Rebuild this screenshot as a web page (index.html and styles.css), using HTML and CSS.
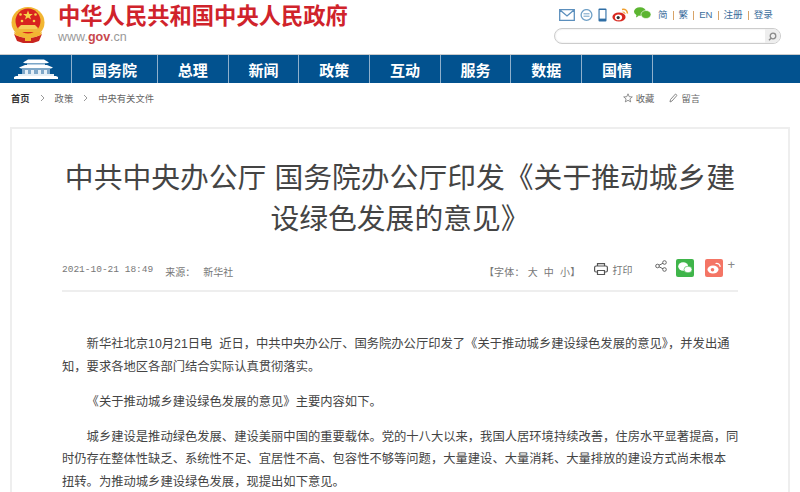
FILE: index.html
```html
<!DOCTYPE html>
<html lang="zh-CN">
<head>
    <meta charset="UTF-8">
    <title>中共中央办公厅 国务院办公厅印发《关于推动城乡建设绿色发展的意见》</title>
    <link rel="stylesheet" href="styles.css">
</head>
<body>
    <div class="header">
        <div class="logo">
            <svg class="emblem" width="34" height="36" viewBox="0 0 34 36">
                <ellipse cx="17" cy="15.500" rx="16.500" ry="15.500" fill="#f2b632"/>
                <circle cx="17" cy="14" r="12.500" fill="#d8231f"/>
                <path d="M17 3.500l1.300 3.400 3.600.1-2.900 2.200 1 3.400-3-2-3 2 1-3.400-2.900-2.200 3.600-.1z" fill="#f7d24a"/>
                <circle cx="9.500" cy="7.500" r="1.300" fill="#f7d24a"/>
                <circle cx="24.500" cy="7.500" r="1.300" fill="#f7d24a"/>
                <circle cx="11" cy="14" r="1.300" fill="#f7d24a"/>
                <circle cx="23" cy="14" r="1.300" fill="#f7d24a"/>
                <path d="M7 21l3-3h14l3 3-1 2H8z" fill="#f5cd5a"/>
                <path d="M4 22h26v3H4z" fill="#f0b93a"/>
                <path d="M3 27q14 8 28 0l-3 7-6 2H12l-6-2z" fill="#c9241f"/>
                <path d="M3 25q14 7 28 0l-1 3q-13 6-26 0z" fill="#f2b632"/>
                <path d="M14 29h6v5h-6z" fill="#f2b632"/>
            </svg>
            <div class="site-name">
                <div class="site-title">中华人民共和国中央人民政府</div>
                <div class="site-url">www.<b>gov</b>.cn</div>
            </div>
        </div>
        <div class="tools">
            <div class="tool-links">
                <svg width="16" height="12" viewBox="0 0 16 12"><path d="M.7.7h14.600v10.600H.7zM1 1l7 6 7-6" fill="none" stroke="#5b8fbd" stroke-width="1.300"/></svg>
                <svg width="13" height="13" viewBox="0 0 13 13"><circle cx="6.500" cy="6" r="5.400" fill="none" stroke="#6fa0c6" stroke-width="1.300"/><path d="M3.500 4.800h6M3.500 7.200h6" stroke="#6fa0c6"/></svg>
                <svg width="9" height="14" viewBox="0 0 9 14"><rect x=".5" y=".5" width="8" height="13" rx="1" fill="#2f6ea5"/><rect x="1.600" y="2" width="5.800" height="8.600" fill="#fff"/></svg>
                <svg width="17" height="14" viewBox="0 0 17 14"><ellipse cx="7" cy="9" rx="6.600" ry="4.600" fill="#d9281f"/><ellipse cx="6.500" cy="9.400" rx="3.600" ry="2.800" fill="#fff"/><circle cx="6.200" cy="9.600" r="1.600" fill="#333"/><path d="M10 1.500q5-1 5.500 4" fill="none" stroke="#f0a030" stroke-width="1.500"/><path d="M10.500 4q2.500-.3 2.700 2" fill="none" stroke="#f0a030"/></svg>
                <svg class="wechat-top" width="17" height="12" viewBox="0 0 17 12"><ellipse cx="6" cy="4.500" rx="6" ry="4.300" fill="#5cb531"/><ellipse cx="12" cy="7.500" rx="5" ry="4" fill="#5cb531" stroke="#fff" stroke-width=".6"/><path d="M2.500 7.500l-.5 3 3-1.800z" fill="#5cb531"/></svg>
                <a class="lang">简</a><i></i><a class="lang">繁</a><i></i><a class="lang">EN</a><i></i><a class="lang">注册</a><i></i><a class="lang">登录</a>
            </div>
            <div class="search">
                <span class="search-btn">
                    <svg width="9" height="9" viewBox="0 0 9 9"><circle cx="5" cy="4" r="2.800" fill="none" stroke="#8a8a8a" stroke-width="1.300"/><path d="M3 6.200L1 8.300" stroke="#8a8a8a" stroke-width="1.300"/></svg>
                </span>
            </div>
        </div>
    </div>

    <div class="nav">
        <div class="nav-item nav-home">
            <svg width="46" height="20" viewBox="0 0 46 20">
                <path d="M10 3.500l5-3h16l5 3-2 .8H12z" fill="#fff"/>
                <path d="M14 4.500h18v1.500H14z" fill="#b9d0e3"/>
                <path d="M6 8.500l6-2.500h22l6 2.500-2 1H8z" fill="#fff"/>
                <path d="M9 10h28v5H9z" fill="#7fa7c8"/>
                <path d="M12 11h3v4h-3zM18 11h3v4h-3zM25 11h3v4h-3zM31 11h3v4h-3z" fill="#e4eef6"/>
                <path d="M5 15h36v2H5z" fill="#e6eff6"/>
                <path d="M1 18l2-1h40l2 1v2H1z" fill="#fff"/>
            </svg>
        </div>
        <a class="nav-item nav-first">国务院</a>
        <a class="nav-item">总理</a>
        <a class="nav-item">新闻</a>
        <a class="nav-item">政策</a>
        <a class="nav-item">互动</a>
        <a class="nav-item">服务</a>
        <a class="nav-item">数据</a>
        <a class="nav-item">国情</a>
    </div>

    <div class="crumbs">
        <div class="crumb-path">
            <b>首页</b>
            <svg width="5" height="8" viewBox="0 0 5 8"><path d="M1 1l3 3-3 3" fill="none" stroke="#999"/></svg>
            <span>政策</span>
            <svg width="5" height="8" viewBox="0 0 5 8"><path d="M1 1l3 3-3 3" fill="none" stroke="#999"/></svg>
            <span>中央有关文件</span>
        </div>
        <div class="crumb-tools">
            <span class="crumb-tool"><svg width="10" height="10" viewBox="0 0 10 10"><path d="M5 .8l1.200 2.900 3.100.2-2.400 2 .8 3-2.700-1.600-2.700 1.600.8-3-2.400-2 3.100-.2z" fill="none" stroke="#777" stroke-width=".8"/></svg>收藏</span>
            <span class="crumb-tool"><svg width="9" height="10" viewBox="0 0 9 10"><path d="M1 9l.5-2.500L6.500 1l1.500 1.400L3 8z" fill="none" stroke="#888"/></svg>留言</span>
        </div>
    </div>

    <div class="article">
        <h1 class="article-title">中共中央办公厅 国务院办公厅印发《关于推动城乡建设绿色发展的意见》</h1>
        <div class="meta">
            <div class="meta-left">
                <span class="date">2021-10-21 18:49</span>
                <span>来源：</span>
                <span class="source">新华社</span>
            </div>
            <div class="meta-right">
                <span class="font-size">【字体： 大&nbsp;&nbsp;中&nbsp;&nbsp;小】</span>
                <span class="print">
                    <svg width="14" height="12" viewBox="0 0 14 12"><path d="M3.500 3V.7h7V3" fill="none" stroke="#555" stroke-width="1.200"/><rect x=".6" y="3" width="12.800" height="6" rx="1.500" fill="none" stroke="#555" stroke-width="1.200"/><path d="M3.500 7.500h7v4h-7z" fill="#fff" stroke="#555" stroke-width="1.200"/></svg>打印
                </span>
                <div class="share">
                    <svg width="12" height="12" viewBox="0 0 12 12"><path d="M9.500 2.500L2.500 6l7 3.500" fill="none" stroke="#666"/><circle cx="9.500" cy="2.500" r="1.800" fill="#fff" stroke="#666"/><circle cx="2.500" cy="6" r="1.800" fill="#fff" stroke="#666"/><circle cx="9.500" cy="9.500" r="1.800" fill="#fff" stroke="#666"/></svg>
                    <span class="share-btn share-wechat">
                        <svg width="14" height="12" viewBox="0 0 14 12"><ellipse cx="5.200" cy="4.500" rx="5" ry="4.200" fill="#fff"/><ellipse cx="10" cy="7.500" rx="4" ry="3.300" fill="#fff" stroke="#3fb54a" stroke-width=".6"/></svg>
                    </span>
                    <span class="share-btn share-weibo">
                        <svg width="14" height="12" viewBox="0 0 14 12"><ellipse cx="6" cy="7.500" rx="5.500" ry="4" fill="#fff"/><circle cx="5.500" cy="7.800" r="1.800" fill="#f47565"/><path d="M8.500 1.500q4-.8 4.800 3.300" fill="none" stroke="#fff" stroke-width="1.200"/></svg>
                    </span>
                    <span class="share-more">+</span>
                </div>
            </div>
        </div>
        <div class="content">
            <p>新华社北京10月21日电&nbsp;&nbsp;近日，中共中央办公厅、国务院办公厅印发了《关于推动城乡建设绿色发展的意见》，并发出通<br>知，要求各地区各部门结合实际认真贯彻落实。</p>
            <p>《关于推动城乡建设绿色发展的意见》主要内容如下。</p>
            <p>城乡建设是推动绿色发展、建设美丽中国的重要载体。党的十八大以来，我国人居环境持续改善，住房水平显著提高，同<br>时仍存在整体性缺乏、系统性不足、宜居性不高、包容性不够等问题，大量建设、大量消耗、大量排放的建设方式尚未根本<br>扭转。为推动城乡建设绿色发展，现提出如下意见。</p>
        </div>
    </div>
</body>
</html>
```

FILE: styles.css
```css
* {
    margin: 0;
    padding: 0;
    box-sizing: border-box;
}

html, body {
    height: 492px;
    overflow: hidden;
}

body {
    font-family: "Liberation Sans", "Noto Sans CJK SC", sans-serif;
    background: #fff;
    color: #333;
}

.header {
    height: 54px;
    display: flex;
    justify-content: space-between;
}

.logo {
    display: flex;
    padding: 7px 0 0 11px;
}

.emblem {
    margin-right: 13px;
}

.site-title {
    font-size: 22.300px;
    font-weight: bold;
    line-height: 24px;
    color: #d0232b;
    margin-top: -2px;
}

.site-url {
    font-size: 12.500px;
    line-height: 14px;
    color: #999;
    margin-top: 1px;
}

.site-url b {
    color: #c8484c;
    font-weight: bold;
}

.tools {
    width: 227px;
    margin-right: 19px;
    padding-top: 7px;
}

.tool-links {
    display: flex;
    align-items: center;
    height: 16px;
    padding-left: 5px;
    gap: 5px;
    font-size: 9.600px;
    color: #3a6d9c;
}

.tool-links i {
    width: 1px;
    height: 9px;
    background: #d9a468;
}

.lang {
    margin-top: -2px;
}

.wechat-top {
    margin-top: -5px;
    margin-right: 2px;
}

.search {
    margin-top: 5px;
    height: 16px;
    border: 1px solid #ccc;
    border-radius: 8px;
    box-shadow: inset 0 0 2px #ddd;
    display: flex;
    justify-content: flex-end;
}

.search-btn {
    width: 15px;
    display: flex;
    align-items: center;
    justify-content: center;
    background: #eee;
    border-radius: 0 8px 8px 0;
}

.nav {
    height: 29px;
    background: #02528f;
    border-top: 1px solid #ccc;
    display: flex;
}

.nav-item {
    height: 28px;
    display: flex;
    align-items: center;
    justify-content: center;
    border-right: 1px solid #8fb0cc;
    color: #fff;
    font-size: 15px;
    font-weight: bold;
    width: 70.700px;
}

.nav-home {
    width: 72px;
}

.nav-first {
    width: 86px;
}

.crumbs {
    height: 44px;
    display: flex;
    justify-content: space-between;
    align-items: center;
    font-size: 9.300px;
    color: #666;
    padding: 0 100px 15px 11px;
}

.crumb-path {
    display: flex;
    align-items: center;
    gap: 10px;
}

.crumb-path b {
    color: #333;
}

.crumb-tools {
    display: flex;
    gap: 15px;
}

.crumb-tool {
    display: flex;
    align-items: center;
    gap: 3px;
}

.article {
    margin: 0 10px;
    border: 2px solid #eee;
    border-bottom: none;
    height: 365px;
    padding: 0 50px;
}

.article-title {
    font-size: 28.800px;
    font-weight: normal;
    line-height: 41px;
    text-align: center;
    color: #444;
    margin-top: 29px;
}

.meta {
    margin-top: 18px;
    height: 34px;
    border-bottom: 2px solid #eee;
    display: flex;
    justify-content: space-between;
    align-items: flex-start;
    font-size: 10px;
    color: #777;
}

.meta-left {
    display: flex;
    gap: 12px;
    padding-top: 6px;
}

.source {
    margin-left: -4px;
}

.date {
    font-family: "Liberation Mono", monospace;
    font-size: 9.500px;
}

.meta-right {
    display: flex;
    padding: 1px 3px 0 0;
}

.font-size {
    padding-top: 5px;
    margin-right: 14px;
    letter-spacing: .2px;
}

.print {
    display: flex;
    align-items: center;
    gap: 4px;
    height: 20px;
    margin-right: 23px;
}

.share {
    display: flex;
    align-items: flex-start;
}

.share-btn {
    width: 18px;
    height: 18px;
    border-radius: 2px;
    display: flex;
    align-items: center;
    justify-content: center;
}

.share > svg {
    margin: 1px 9px 0 0;
}

.share-wechat {
    background: #3fb54a;
    margin-right: 11px;
}

.share-weibo {
    background: #f47565;
    margin-right: 4px;
}

.share-more {
    font-size: 13px;
    line-height: 12px;
    color: #888;
}

.content {
    padding-top: 41px;
    font-size: 12.300px;
    line-height: 22.500px;
    color: #444;
    white-space: nowrap;
}

.content p {
    text-indent: 2em;
    margin-bottom: 12.500px;
}
```
